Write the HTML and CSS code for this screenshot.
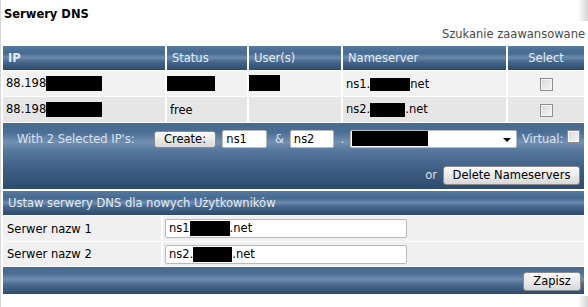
FILE: index.html
```html
<!DOCTYPE html>
<html lang="pl">
<head>
    <meta charset="UTF-8">
    <title>Serwery DNS</title>
    <link rel="stylesheet" href="styles.css">
</head>
<body>
    <div class="page">
        <h1 class="title">Serwery DNS</h1>
        <div class="content">
            <div class="adv">Szukanie zaawansowane</div>

            <table class="list">
                <colgroup>
                    <col class="c-ip"><col class="c-status"><col class="c-users"><col class="c-ns"><col class="c-select">
                </colgroup>
                <tr class="head">
                    <th class="ip-head">IP</th>
                    <th>Status</th>
                    <th>User(s)</th>
                    <th>Nameserver</th>
                    <th class="center">Select</th>
                </tr>
                <tr class="row1">
                    <td>88.198<span class="redact r-ip"></span></td>
                    <td class="flush"><span class="redact r-status"></span></td>
                    <td class="flush"><span class="redact r-users"></span></td>
                    <td>ns1.<span class="redact r-ns1"></span>net</td>
                    <td class="center"><span class="check"></span></td>
                </tr>
                <tr class="row2">
                    <td>88.198<span class="redact r-ip2"></span></td>
                    <td>free</td>
                    <td></td>
                    <td>ns2.<span class="redact r-ns2"></span>.net</td>
                    <td class="center"><span class="check"></span></td>
                </tr>
                <tr>
                    <td colspan="5" class="actions">
                        <div class="line">
                            <span class="label">With 2 Selected IP's:</span>
                            <span class="btn btn-create">Create:</span>
                            <span class="field f-ns">ns1</span>
                            <span class="sep">&amp;</span>
                            <span class="field f-ns">ns2</span>
                            <span class="sep dot">.</span>
                            <span class="field f-select"><span class="redact r-select"></span><span class="arrow"></span></span>
                            <span class="sep virt">Virtual:</span>
                            <span class="check"></span>
                        </div>
                        <div class="line right">
                            <span class="sep">or</span>
                            <span class="btn btn-delete">Delete Nameservers</span>
                        </div>
                    </td>
                </tr>
            </table>

            <table class="list settings">
                <colgroup>
                    <col class="c-label"><col>
                </colgroup>
                <tr class="head">
                    <th colspan="2">Ustaw serwery DNS dla nowych Użytkowników</th>
                </tr>
                <tr class="srow">
                    <td class="slabel">Serwer nazw 1</td>
                    <td class="sinput"><span class="field f-wide">ns1<span class="redact r-s1"></span>.net</span></td>
                </tr>
                <tr class="srow srow2">
                    <td class="slabel">Serwer nazw 2</td>
                    <td class="sinput"><span class="field f-wide">ns2.<span class="redact r-s2"></span>.net</span></td>
                </tr>
                <tr>
                    <td colspan="2" class="foot"><span class="btn btn-save">Zapisz</span></td>
                </tr>
            </table>
        </div>
    </div>
</body>
</html>
```

FILE: styles.css
```css
html, body {
    margin: 0;
    padding: 0;
}

body {
    font-family: "DejaVu Sans", Verdana, sans-serif;
    font-size: 11.5px;
    line-height: 14px;
    color: #000;
    background: linear-gradient(to right, #fff 578px, #d4d4d4 588px);
    height: 307px;
    overflow: hidden;
}

.page {
    border-left: 1px solid #d6d6d6;
    height: 307px;
}

.title {
    margin: 0;
    padding: 7px 0 0 3px;
    font-size: 11.5px;
    line-height: 14px;
    height: 14px;
    font-weight: bold;
}

.content {
    background: #fff;
    padding-top: 6px;
    padding-bottom: 1px;
    margin-right: -1px;
}

.adv {
    text-align: right;
    color: #4a4a4a;
    padding-right: 4px;
}

.list {
    border-collapse: separate;
    border-spacing: 2px 1px;
    table-layout: fixed;
    width: 585px;
    margin-top: 4px;
}

.c-ip { width: 162px; }
.c-status { width: 80px; }
.c-users { width: 92px; }
.c-ns { width: 163px; }
.c-select { width: 76px; }
.c-label { width: 158px; }

.list th, .list td {
    padding: 0 3px;
    text-align: left;
    white-space: nowrap;
    overflow: hidden;
    box-sizing: border-box;
}

.head th {
    height: 24px;
    font-weight: normal;
    color: #e4ebf3;
    padding-left: 5px;
    background: linear-gradient(#5679a0 0%, #46698f 30%, #6b8aae 48%, #46668b 66%, #2d4a6b 100%);
}

.head th.ip-head {
    font-weight: bold;
}

.list .center {
    text-align: center;
    padding: 0;
}

.row1 td {
    height: 25px;
    background: #f2f2f2;
}

.row2 td {
    height: 25px;
    background: #e6e6e6;
}

.list td.flush {
    padding: 0;
}

.redact {
    display: inline-block;
    background: #000;
    vertical-align: middle;
}

.r-ip { width: 56px; height: 15px; }
.r-ip2 { width: 56px; height: 15px; }
.r-status { width: 48px; height: 15px; }
.r-users { width: 32px; height: 16px; margin-left: -1px; vertical-align: top; margin-top: -1px; }
.r-ns1 { width: 40px; height: 13px; }
.r-ns2 { width: 35px; height: 14px; }
.r-select { width: 76px; height: 15px; }
.r-s1 { width: 40px; height: 15px; }
.r-s2 { width: 39px; height: 15px; }

.check {
    display: inline-block;
    width: 11px;
    height: 11px;
    border: 1px solid #8e8e8e;
    background: linear-gradient(135deg, #d8d8d8, #f7f7f7);
    vertical-align: middle;
    box-shadow: inset 0 0 0 1px #f4f4f4;
}

.list td.actions {
    height: 66px;
    padding: 7px 4px 5px 14px;
    vertical-align: top;
    color: #d9e2ec;
    background: linear-gradient(#46698f 0%, #4b6e94 14%, #7390b2 29%, #56779c 42%, #3e5e83 70%, #2d4b6d 100%);
}

.line {
    display: flex;
    align-items: center;
    height: 18px;
}

.line.right {
    justify-content: flex-end;
    margin-top: 18px;
}

.label {
    margin-right: 19px;
}

.btn {
    display: inline-block;
    box-sizing: border-box;
    height: 17px;
    line-height: 15px;
    border: 1px solid #8a8a8a;
    border-radius: 3px;
    background: linear-gradient(#fbfbfb, #e9e9e9 50%, #d8d8d8);
    color: #000;
    text-align: center;
    vertical-align: middle;
}

.btn-create { width: 65px; }
.btn-delete { width: 137px; height: 19px; line-height: 17px; }
.btn-save { width: 58px; height: 19px; line-height: 17px; }

.field {
    display: inline-block;
    box-sizing: border-box;
    height: 18px;
    line-height: 16px;
    border: 1px solid #b9b9b9;
    border-radius: 2px;
    background: #fff;
    color: #000;
    padding-left: 3px;
    position: relative;
    vertical-align: middle;
}

.f-ns {
    width: 46px;
    margin-left: 6px;
}

.sep {
    margin-left: 8px;
}

.sep.dot {
    margin-left: 6px;
}

.f-select {
    width: 173px;
    margin-left: 6px;
    padding-left: 1px;
}

.f-select .redact {
    vertical-align: top;
}

.arrow {
    position: absolute;
    right: 5px;
    top: 7px;
    border-left: 4px solid transparent;
    border-right: 4px solid transparent;
    border-top: 4px solid #000;
}

.virt {
    margin-left: 5px;
    margin-right: 4px;
}

.line .check {
    margin-top: -5px;
}

.line.right .sep {
    margin-right: 6px;
}

.srow td {
    height: 25px;
    background: #f0f0f0;
}

.srow2 td {
    height: 24px;
}

.list td.slabel {
    padding-left: 4px;
}

.list td.sinput {
    padding-left: 2px;
}

.f-wide {
    width: 242px;
    height: 19px;
    line-height: 17px;
    padding-left: 3px;
}

.f-wide .redact {
    vertical-align: top;
    margin-top: 1px;
}

.list td.foot {
    height: 27px;
    text-align: right;
    padding-right: 3px;
    padding-top: 1px;
    background: linear-gradient(#46698f 0%, #4c6f95 25%, #6f8db0 45%, #4a6a8f 65%, #2d4a6b 100%);
}

.settings {
    margin-top: 0;
}
```
